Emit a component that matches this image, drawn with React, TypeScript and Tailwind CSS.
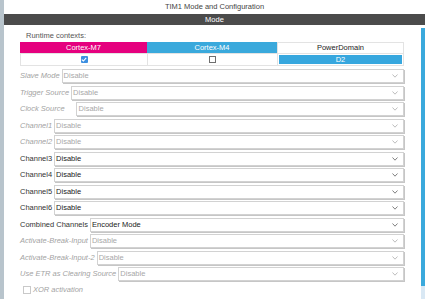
import React from "react"

type Row = {
  label: string
  value: string
  enabled?: boolean
  extraGap?: number
}

const rows: Row[] = [
  { label: "Slave Mode", value: "Disable" },
  { label: "Trigger Source", value: "Disable" },
  { label: "Clock Source", value: "Disable", extraGap: 1 },
  { label: "Channel1", value: "Disable" },
  { label: "Channel2", value: "Disable" },
  { label: "Channel3", value: "Disable", enabled: true },
  { label: "Channel4", value: "Disable", enabled: true },
  { label: "Channel5", value: "Disable", enabled: true },
  { label: "Channel6", value: "Disable", enabled: true },
  { label: "Combined Channels", value: "Encoder Mode", enabled: true },
  { label: "Activate-Break-Input", value: "Disable" },
  { label: "Activate-Break-Input-2", value: "Disable" },
  { label: "Use ETR as Clearing Source", value: "Disable" },
]

function Chevron({ enabled }: { enabled?: boolean }) {
  return (
    <svg width="6" height="4" viewBox="0 0 6 4" className="mr-[5px] shrink-0">
      <polyline
        points="0.5,0.5 3,3.2 5.5,0.5"
        fill="none"
        stroke={enabled ? "#707070" : "#b5b5b5"}
        strokeWidth="0.9"
      />
    </svg>
  )
}

function SelectRow({ row }: { row: Row }) {
  return (
    <div className="flex h-[14px] items-center gap-[2px]">
      <span
        className={`whitespace-nowrap ${
          row.enabled ? "text-[#333333]" : "italic text-[#a3a3a3]"
        } ${row.extraGap ? "mr-[9px]" : ""}`}
      >
        {row.label}
      </span>
      <div className="flex h-full flex-1 items-center justify-between border border-[#d2d2d2] bg-white shadow-[1px_1px_0_#c6c6c6]">
        <span
          className={`pl-[1px] ${row.enabled ? "text-[#222222]" : "text-[#a8a8a8]"} ${
            row.extraGap ? "pl-[2px]" : ""
          }`}
        >
          {row.value}
        </span>
        <Chevron enabled={row.enabled} />
      </div>
    </div>
  )
}

export default function App() {
  return (
    <div className="flex h-[299px] w-[425px] overflow-hidden bg-white font-['Liberation_Sans',Arial,sans-serif] text-[7.5px] leading-none">
      {/* left edge strip */}
      <div className="w-[4px] shrink-0 bg-[#b8c4cc]" />

      <div className="flex flex-1 flex-col">
        <div className="flex h-[14px] items-center justify-center text-[#444444]">
          TIM1 Mode and Configuration
        </div>
        <div className="flex h-[11px] items-center justify-center bg-[#4b4b4b] text-white">
          Mode
        </div>

        <div className="flex flex-1">
          {/* Form */}
          <div className="flex-1 pl-[16px] pr-[17px] pt-[5px]">
            <div className="flex h-[12px] items-center pl-[6px] text-[#555555]">Runtime contexts:</div>

            <div className="grid grid-cols-[127px_130px_127px]">
              <div className="flex h-[11px] items-center justify-center bg-[#e5007e] text-white">Cortex-M7</div>
              <div className="flex h-[11px] items-center justify-center bg-[#3aa9dc] text-white">Cortex-M4</div>
              <div className="flex h-[11px] items-center justify-center border border-b-0 border-[#e3e3e3] text-[#222222]">
                PowerDomain
              </div>

              <div className="flex h-[13px] items-center justify-center border border-r-0 border-[#e3e3e3]">
                <div className="flex h-[7px] w-[7px] items-center justify-center rounded-[1px] bg-[#3c8fe0]">
                  <svg width="6" height="5" viewBox="0 0 6 5">
                    <polyline points="0.8,2.6 2.4,4 5.2,0.9" fill="none" stroke="white" strokeWidth="1.1" />
                  </svg>
                </div>
              </div>
              <div className="flex h-[13px] items-center justify-center border border-r-0 border-[#e3e3e3]">
                <div className="h-[7px] w-[7px] border border-[#6f6f6f] bg-white" />
              </div>
              <div className="flex h-[13px] border border-[#e3e3e3] p-px">
                <div className="flex flex-1 items-center justify-center bg-[#37a7de] text-white">D2</div>
              </div>
            </div>

            <div className="mt-[3px] flex flex-col gap-[2.5px]">
              {rows.map((row) => (
                <SelectRow key={row.label} row={row} />
              ))}
            </div>

            <div className="mt-[4px] flex h-[10px] items-center gap-[2px] pl-[3px]">
              <div className="h-[8px] w-[8px] border border-[#c9c9c9] bg-white" />
              <span className="italic text-[#a3a3a3]">XOR activation</span>
            </div>
          </div>

          {/* scrollbar */}
          <div className="flex w-[4px] shrink-0 flex-col pt-[3px]">
            <div className="flex-1 bg-[#3aa9dc]" />
            <div className="h-[13px] bg-[#d9e8f4]" />
          </div>
        </div>
      </div>
    </div>
  )
}
